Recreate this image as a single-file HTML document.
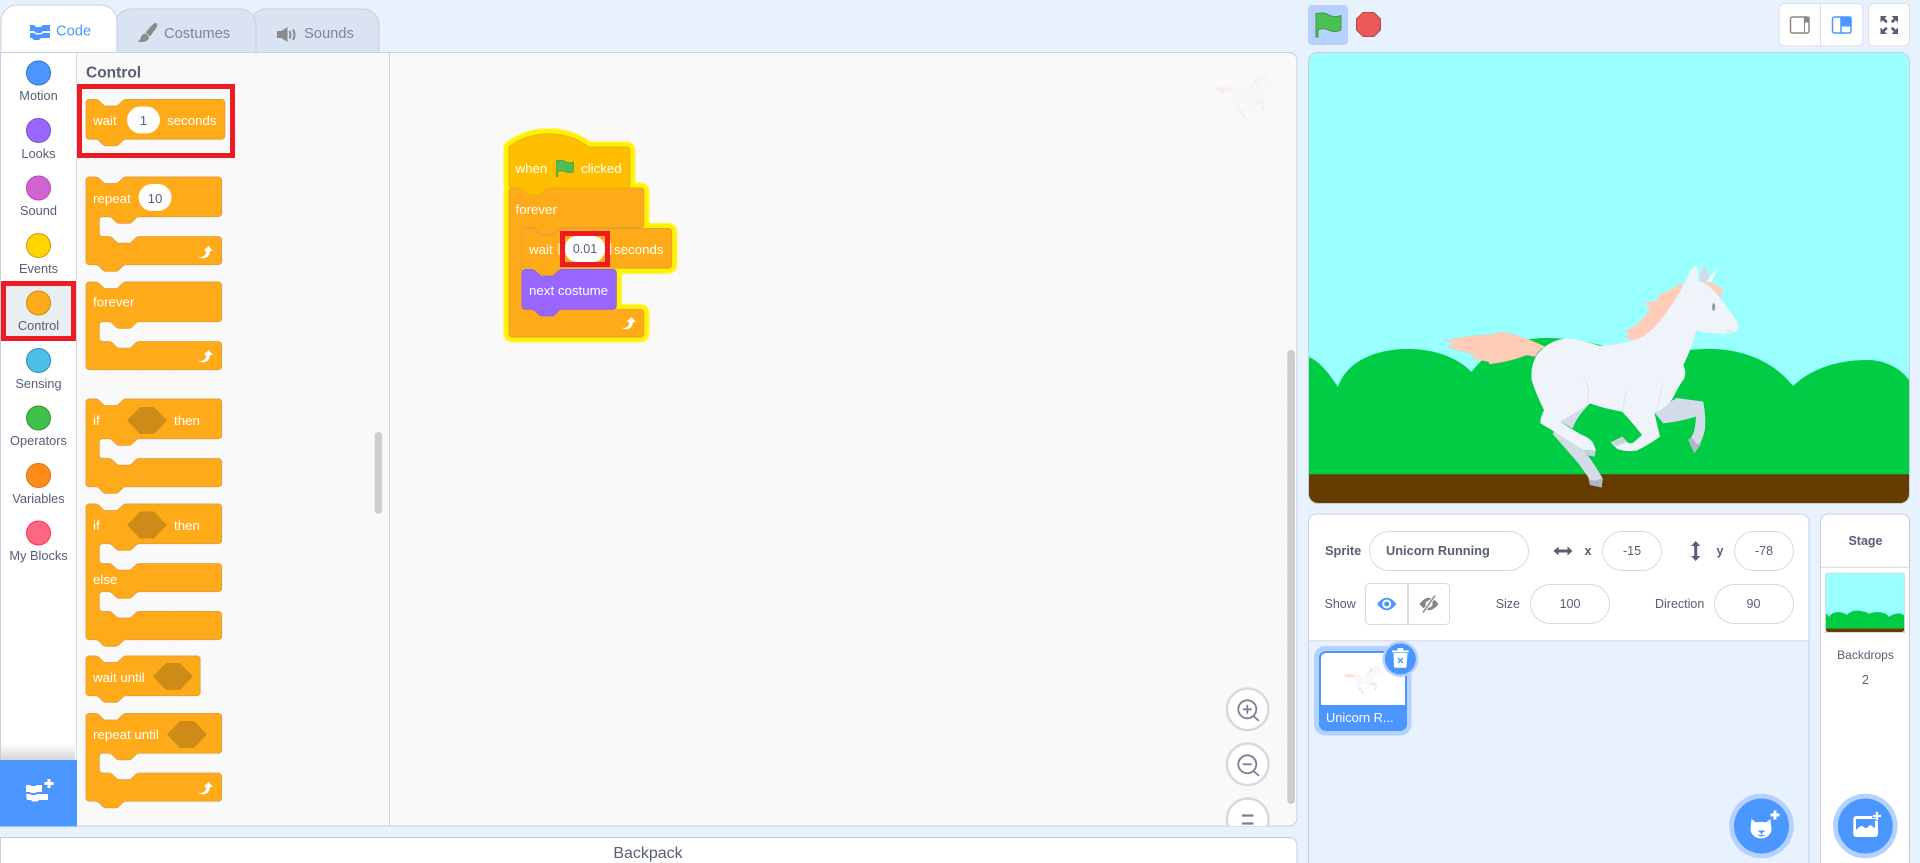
<!DOCTYPE html>
<html><head><meta charset="utf-8"><title>Scratch</title>
<style>
html,body{margin:0;padding:0;background:#e8f1fe;width:1920px;height:863px;overflow:hidden}
svg{display:block}
text{font-family:"Liberation Sans",sans-serif}
.b{fill:#fff;font-size:13.3px}
.c{fill:#575e75;font-size:12.8px;text-anchor:middle}
.l{fill:#575e75;font-size:12.5px}
.m{text-anchor:middle}
.B{font-weight:bold}
.o{fill:#ffab19;stroke:#e0a03a;stroke-width:1.1}
</style></head><body>
<svg width="1920" height="863" viewBox="0 0 1920 863" xmlns="http://www.w3.org/2000/svg">
<defs>
<pattern id="dots" x="6" y="2.8" width="33.6" height="33.6" patternUnits="userSpaceOnUse"><circle cx="1" cy="1" r=".8" fill="#e9e9e9"/></pattern>
<clipPath id="stageclip"><rect x="1309" y="53" width="600" height="450" rx="9"/></clipPath>
<clipPath id="panelclip"><path d="M0 52H1289a8 8 0 0 1 8 8V818a8 8 0 0 1-8 8H0z"/></clipPath>
<filter id="soft" x="-10%" y="-10%" width="120%" height="120%"><feGaussianBlur stdDeviation=".7"/></filter>

<path id="cNotch" d="M0 4a4 4 0 0 1 4-4H12c2 0 3 1 4 2l4 4c1 1 2 2 4 2h12c2 0 3-1 4-2l4-4c1-1 2-2 4-2H160a4 4 0 0 1 4 4V44a4 4 0 0 1-4 4H64c-2 0-3 1-4 2l-4 4c-1 1-2 2-4 2h-12c-2 0-3-1-4-2l-4-4c-1-1-2-2-4-2H20a4 4 0 0 0-4 4V68a4 4 0 0 0 4 4H28c2 0 3 1 4 2l4 4c1 1 2 2 4 2h12c2 0 3-1 4-2l4-4c1-1 2-2 4-2H160a4 4 0 0 1 4 4V102a4 4 0 0 1-4 4H48c-2 0-3 1-4 2l-4 4c-1 1-2 2-4 2h-12c-2 0-3-1-4-2l-4-4c-1-1-2-2-4-2H4a4 4 0 0 1-4-4z"/>
<path id="cFlat" d="M0 4a4 4 0 0 1 4-4H12c2 0 3 1 4 2l4 4c1 1 2 2 4 2h12c2 0 3-1 4-2l4-4c1-1 2-2 4-2H160a4 4 0 0 1 4 4V44a4 4 0 0 1-4 4H64c-2 0-3 1-4 2l-4 4c-1 1-2 2-4 2h-12c-2 0-3-1-4-2l-4-4c-1-1-2-2-4-2H20a4 4 0 0 0-4 4V68a4 4 0 0 0 4 4H28c2 0 3 1 4 2l4 4c1 1 2 2 4 2h12c2 0 3-1 4-2l4-4c1-1 2-2 4-2H160a4 4 0 0 1 4 4V102a4 4 0 0 1-4 4H4a4 4 0 0 1-4-4z"/>
<path id="cElse" d="M0 4a4 4 0 0 1 4-4H12c2 0 3 1 4 2l4 4c1 1 2 2 4 2h12c2 0 3-1 4-2l4-4c1-1 2-2 4-2H160a4 4 0 0 1 4 4V44a4 4 0 0 1-4 4H64c-2 0-3 1-4 2l-4 4c-1 1-2 2-4 2h-12c-2 0-3-1-4-2l-4-4c-1-1-2-2-4-2H20a4 4 0 0 0-4 4V68a4 4 0 0 0 4 4H28c2 0 3 1 4 2l4 4c1 1 2 2 4 2h12c2 0 3-1 4-2l4-4c1-1 2-2 4-2H160a4 4 0 0 1 4 4V102a4 4 0 0 1-4 4H64c-2 0-3 1-4 2l-4 4c-1 1-2 2-4 2h-12c-2 0-3-1-4-2l-4-4c-1-1-2-2-4-2H20a4 4 0 0 0-4 4V126a4 4 0 0 0 4 4H28c2 0 3 1 4 2l4 4c1 1 2 2 4 2h12c2 0 3-1 4-2l4-4c1-1 2-2 4-2H160a4 4 0 0 1 4 4V160a4 4 0 0 1-4 4H48c-2 0-3 1-4 2l-4 4c-1 1-2 2-4 2h-12c-2 0-3-1-4-2l-4-4c-1-1-2-2-4-2H4a4 4 0 0 1-4-4z"/>
<path id="wait168" d="M0 4a4 4 0 0 1 4-4H12c2 0 3 1 4 2l4 4c1 1 2 2 4 2h12c2 0 3-1 4-2l4-4c1-1 2-2 4-2H164a4 4 0 0 1 4 4V44a4 4 0 0 1-4 4H48c-2 0-3 1-4 2l-4 4c-1 1-2 2-4 2h-12c-2 0-3-1-4-2l-4-4c-1-1-2-2-4-2H4a4 4 0 0 1-4-4z"/>
<path id="wait138" d="M0 4a4 4 0 0 1 4-4H12c2 0 3 1 4 2l4 4c1 1 2 2 4 2h12c2 0 3-1 4-2l4-4c1-1 2-2 4-2H134a4 4 0 0 1 4 4V44a4 4 0 0 1-4 4H48c-2 0-3 1-4 2l-4 4c-1 1-2 2-4 2h-12c-2 0-3-1-4-2l-4-4c-1-1-2-2-4-2H4a4 4 0 0 1-4-4z"/>
<path id="wait181" d="M0 4a4 4 0 0 1 4-4H12c2 0 3 1 4 2l4 4c1 1 2 2 4 2h12c2 0 3-1 4-2l4-4c1-1 2-2 4-2H177a4 4 0 0 1 4 4V44a4 4 0 0 1-4 4H48c-2 0-3 1-4 2l-4 4c-1 1-2 2-4 2h-12c-2 0-3-1-4-2l-4-4c-1-1-2-2-4-2H4a4 4 0 0 1-4-4z"/>
<path id="next114" d="M0 4a4 4 0 0 1 4-4H12c2 0 3 1 4 2l4 4c1 1 2 2 4 2h12c2 0 3-1 4-2l4-4c1-1 2-2 4-2H110a4 4 0 0 1 4 4V44a4 4 0 0 1-4 4H48c-2 0-3 1-4 2l-4 4c-1 1-2 2-4 2h-12c-2 0-3-1-4-2l-4-4c-1-1-2-2-4-2H4a4 4 0 0 1-4-4z"/>
<path id="hat" d="M0 0c25.6-21.3 70.4-21.3 96 0H142a4 4 0 0 1 4 4V46a4 4 0 0 1-4 4H48c-2 0-3 1-4 2l-4 4c-1 1-2 2-4 2h-12c-2 0-3-1-4-2l-4-4c-1-1-2-2-4-2H4a4 4 0 0 1-4-4z"/>
<path id="fvr" d="M0 4a4 4 0 0 1 4-4H12c2 0 3 1 4 2l4 4c1 1 2 2 4 2h12c2 0 3-1 4-2l4-4c1-1 2-2 4-2H159a4 4 0 0 1 4 4V44a4 4 0 0 1-4 4H64c-2 0-3 1-4 2l-4 4c-1 1-2 2-4 2h-12c-2 0-3-1-4-2l-4-4c-1-1-2-2-4-2H20a4 4 0 0 0-4 4V143a4 4 0 0 0 4 4H28c2 0 3 1 4 2l4 4c1 1 2 2 4 2h12c2 0 3-1 4-2l4-4c1-1 2-2 4-2H159a4 4 0 0 1 4 4V176a4 4 0 0 1-4 4H4a4 4 0 0 1-4-4z"/>

<path id="ar" d="M0 10.500C4.500 11.800 8 10 8.300 5H5.500L10.500 0L15 5H12C12 11 6 14.500 0 10.500z" fill="#fff"/>
<path id="flag" d="M2 1.500Q8 0 14 3.500Q20 6 25 3.500V18Q20 21 14 18.500Q8 15.500 2 17.500V25H0V1.500z"/>
<polygon id="hex" points="0,13.500 13,0 27,0 40,13.500 27,27 13,27" fill="#cf8b17"/>
<rect id="oval" x="0" y="0" width="33" height="27" rx="13.500" fill="#fff"/>

<g id="hills">
<rect x="1309" y="53" width="600" height="450" fill="#99ffff"/>
<path d="M1309 357C1320 362 1328 372 1338 387C1346 362 1375 349 1407 349C1436 349 1458 358 1471.500 372C1487 351 1515 338 1546 338C1580 338 1610 345 1640 362C1655 355 1680 349 1710 349C1745 349 1775 363 1793 386C1810 370 1835 360 1867 360C1885 360 1900 368 1909 380V480H1309z" fill="#00cc44"/>
<rect x="1309" y="474.300" width="600" height="29" fill="#663c00"/>
</g>

<g id="uni">
<g transform="translate(1420,240) scale(.33333)">
 <path d="M75 302Q150 285 225 283L237 276Q290 280 375 320Q355 330 345 350L320 345Q270 365 210 372L205 365L155 355L168 345Q130 335 80 320L105 310z" fill="#ffccb8" stroke="#f1b9a6" stroke-width="1"/>
 <path d="M612 275Q645 262 665 240Q680 220 692 205L670 190L715 180L712 168Q750 150 785 130L790 170Q735 240 672 292Q650 300 635 298L612 290L632 282z" fill="#ffccb8"/>
 <path d="M850 72L838 122L866 128L866 102z" fill="#d4dbe8"/>
 <path d="M398 582Q400 572 420 575L495 625L500 642Q525 675 548 715L545 742L510 735L505 712Q490 690 475 670Q445 635 398 582z" fill="#d4dbe8"/>
 <path d="M480 490L512 488Q470 530 458 565L420 545z" fill="#d4dbe8"/>
 <path d="M703 518Q740 490 770 474L850 485Q858 530 855 565Q850 600 823 640L805 600Q825 590 828 530Q780 545 730 550z" fill="#d4dbe8"/>
 <path d="M823 640L805 598L815 592L830 612L845 610z" fill="#aeb7c7"/>
 <path d="M510 735L507 718L525 722L545 716L545 742z" fill="#aeb7c7"/>
 <path d="M783 150L800 115Q818 78 830 76Q837 92 836 125Q862 128 880 150Q915 190 945 235Q960 255 952 270Q945 282 915 280Q870 282 828 272Q822 300 812 325Q800 355 790 375Q800 395 793 415Q775 440 760 472Q740 505 703 518L720 590Q690 612 650 632Q615 636 592 627L572 607L607 590L622 607Q632 612 640 608L666 585Q635 545 606 515Q550 505 510 490Q465 520 420 545L480 582Q512 595 520 610L528 632L490 630Q420 585 362 550Q358 540 372 510Q345 455 335 420Q330 380 350 345Q385 300 440 295Q490 300 540 318Q610 315 670 290Q725 250 783 150z" fill="#eff4fa"/>
 <path d="M572 607L607 590L618 607L590 618z" fill="#c9d1de"/>
 <path d="M490 630L527 632L524 650L498 645z" fill="#c9d1de"/>
 <path d="M895 78L858 128L875 125z" fill="#f6f9fc"/>
 <path d="M838 122Q865 125 890 135L910 150L900 160L910 182Q890 160 880 150Q868 138 858 130z" fill="#ffccb8"/>
 <ellipse cx="881" cy="201" rx="4.500" ry="11.500" fill="#8a94a5"/>
 <path d="M918 270L945 278" stroke="#c8d0dc" stroke-width="2" fill="none"/>
 <path d="M620 450L607 510M730 430L710 510M490 410Q515 450 500 490" stroke="#d4dbe8" stroke-width="2" fill="none"/>
</g>
</g>
</defs>

<!-- background -->
<rect width="1920" height="863" fill="#e8f1fe"/>

<!-- tabs -->
<path d="M250 52.500V25a16 16 0 0 1 16-16H363a16 16 0 0 1 16 16V52.500z" fill="#d9e3f2" stroke="#c5cfdf"/>
<path d="M115 52.500V25a16 16 0 0 1 16-16H240a16 16 0 0 1 16 16V52.500z" fill="#d9e3f2" stroke="#c5cfdf"/>

<!-- main panel -->
<path d="M.5 52.500H1289a8 8 0 0 1 8 8V818a8 8 0 0 1-8 8H.5z" fill="#f9f9f9" stroke="#c5cfdf"/>
<path d="M77 53H1296V818a8 8 0 0 1-8 7.500H77z" fill="url(#dots)"/>
<path d="M1 52.500V21a16 16 0 0 1 16-16H101a16 16 0 0 1 16 16V52.500" fill="#fff" stroke="#c5cfdf"/>
<path d="M1 52.500H117" stroke="#c5cfdf"/>

<!-- tab icons/text -->
<g fill="#4c97ff">
<path d="M30 25h4l2 2h5l2-2h7v6h-7l-2 2h-5l-2-2h-4z"/>
<path d="M30 33h4l2 1.500h5l2-1.500h7v5h-9l-2 2h-5l-2-2h-2z"/>
</g>
<text x="56" y="35.300" fill="#4c97ff" font-size="14.700">Code</text>
<g fill="#8b8b8b">
<path d="M145.500 32.500L152 25Q155.500 22 157 23.500Q158 25.500 155.500 29L150 36.500z"/>
<path d="M144.500 33.500Q148.500 34.500 149 38Q148 41 144 41.800Q141 42.500 138 41.500Q140.500 40 141 37Q141.800 34.500 144.500 33.500z"/>
</g>
<text x="164" y="38" fill="#7e8598" font-size="14.700">Costumes</text>
<g fill="#8b8b8b">
<path d="M277 31h4.500l6-4v15l-6-4H277z"/>
<path d="M289.500 31Q291.500 34.800 289.500 38.500" stroke="#8b8b8b" stroke-width="2" fill="none"/>
<path d="M293 29.500Q296 34.800 293 40" stroke="#8b8b8b" stroke-width="2" fill="none"/>
</g>
<text x="304" y="38" fill="#7e8598" font-size="14.700">Sounds</text>

<!-- category column -->
<rect x="1" y="53" width="75" height="707" fill="#fff"/>
<rect x="76" y="53" width="1" height="773" fill="#d9dfe9"/>
<rect x="389" y="53" width="1" height="773" fill="#ced4de"/>
<rect x="3" y="284" width="71" height="55" fill="#e9eef2"/>
<g stroke-width="1">
<circle cx="38.500" cy="73" r="12" fill="#4c97ff" stroke="#3373cc"/>
<circle cx="38.500" cy="130.500" r="12" fill="#9966ff" stroke="#774dcb"/>
<circle cx="38.500" cy="188" r="12" fill="#cf63cf" stroke="#bd42bd"/>
<circle cx="38.500" cy="245.500" r="12" fill="#ffd500" stroke="#cc9900"/>
<circle cx="38.500" cy="303" r="12" fill="#ffab19" stroke="#cf8b17"/>
<circle cx="38.500" cy="360.500" r="12" fill="#4cbfe6" stroke="#2e8eb8"/>
<circle cx="38.500" cy="418" r="12" fill="#40bf4a" stroke="#389438"/>
<circle cx="38.500" cy="475.500" r="12" fill="#ff8c1a" stroke="#db6e00"/>
<circle cx="38.500" cy="533" r="12" fill="#ff6680" stroke="#ff3355"/>
</g>
<text class="c" x="38.500" y="100">Motion</text>
<text class="c" x="38.500" y="158">Looks</text>
<text class="c" x="38.500" y="215">Sound</text>
<text class="c" x="38.500" y="273">Events</text>
<text class="c" x="38.500" y="330">Control</text>
<text class="c" x="38.500" y="388">Sensing</text>
<text class="c" x="38.500" y="445">Operators</text>
<text class="c" x="38.500" y="503">Variables</text>
<text class="c" x="38.500" y="560">My Blocks</text>
<rect x="3.500" y="283.500" width="70" height="55" fill="none" stroke="#ed1c24" stroke-width="5"/>
<linearGradient id="fade" x1="0" y1="0" x2="0" y2="1"><stop offset="0" stop-color="#fff"/><stop offset="1" stop-color="#d6d6d6"/></linearGradient>
<rect x="1" y="743" width="74" height="17" fill="url(#fade)"/>
<rect x="0" y="760" width="77" height="66.500" fill="#4c97ff"/>
<g fill="#fff">
<path d="M26 785h4l1.500 1h4l1.500-1h5v7h-5l-1.500 1h-4l-1.500-1h-4z"/>
<path d="M26 794h4l1.500 1h4l1.500-1h11v6h-9l-1.500 1.500h-5l-1.500-1.500h-4z"/>
<path d="M47.500 779h3v3h3v3h-3v3h-3v-3h-3v-3h3z"/>
</g>

<!-- flyout -->
<text x="86" y="77.500" fill="#575e75" font-size="15.500" class="B">Control</text>

<use href="#wait168" class="o" transform="translate(86,99.500) scale(.827)"/>
<text class="b" x="93" y="125">wait</text>
<use href="#oval" x="127" y="106.500"/>
<text x="143.500" y="125" fill="#575e75" font-size="13.300" class="m">1</text>
<text class="b" x="167" y="125">seconds</text>
<rect x="79.500" y="86.500" width="153" height="69" fill="none" stroke="#ed1c24" stroke-width="5"/>

<use href="#cNotch" class="o" transform="translate(86,177) scale(.827)"/>
<text class="b" x="93" y="203">repeat</text>
<use href="#oval" x="138.500" y="184"/>
<text x="155" y="203" fill="#575e75" font-size="13.300" class="m">10</text>
<use href="#ar" x="198" y="246"/>

<use href="#cFlat" class="o" transform="translate(86,282) scale(.827)"/>
<text class="b" x="93" y="306.500">forever</text>
<use href="#ar" x="198" y="350"/>

<use href="#cNotch" class="o" transform="translate(86,399) scale(.827)"/>
<text class="b" x="93" y="425">if</text>
<use href="#hex" x="127" y="407"/>
<text class="b" x="174" y="425">then</text>

<use href="#cElse" class="o" transform="translate(86,504) scale(.827)"/>
<text class="b" x="93" y="530">if</text>
<use href="#hex" x="127" y="511.500"/>
<text class="b" x="174" y="530">then</text>
<text class="b" x="93" y="584">else</text>

<use href="#wait138" class="o" transform="translate(86,656) scale(.827)"/>
<text class="b" x="93" y="682">wait until</text>
<use href="#hex" x="153" y="663"/>

<use href="#cNotch" class="o" transform="translate(86,713.500) scale(.827)"/>
<text class="b" x="93" y="739">repeat until</text>
<use href="#hex" x="167" y="721"/>
<use href="#ar" x="198" y="782"/>

<rect x="374.700" y="432" width="7.500" height="82" rx="3.700" fill="#cecdce"/>

<!-- ghost unicorn in workspace -->
<g opacity=".22" transform="translate(1213,73) scale(.2) translate(-1445,-265)"><use href="#uni"/></g>

<!-- workspace script: glow -->
<g fill="#fff200" stroke="#fff200" stroke-width="13" stroke-linejoin="round" filter="url(#soft)">
<use href="#hat" transform="translate(509,147) scale(.827)"/>
<use href="#fvr" transform="translate(509,188) scale(.827)"/>
<use href="#wait181" transform="translate(522,228.500) scale(.827)"/>
<use href="#next114" transform="translate(522,269.500) scale(.827)"/>
</g>
<use href="#fvr" class="o" transform="translate(509,188) scale(.827)"/>
<use href="#hat" fill="#ffbf00" stroke="#e6ad10" stroke-width="1.100" transform="translate(509,147) scale(.827)"/>
<use href="#flag" fill="#4cbf56" stroke="#45993d" stroke-width="1" transform="translate(556.500,159.500) scale(.68)"/>
<text class="b" x="515.500" y="173">when</text>
<text class="b" x="581" y="173">clicked</text>
<text class="b" x="515.500" y="214">forever</text>
<use href="#ar" x="621" y="317"/>
<use href="#wait181" class="o" transform="translate(522,228.500) scale(.827)"/>
<text class="b" x="529" y="254">wait</text>
<text class="b" x="614" y="254">seconds</text>
<path d="M559 243v12M610.700 243v12" stroke="#fff" stroke-width="1"/>
<rect x="565" y="236" width="40" height="26" rx="12" fill="#fff"/>
<text x="585" y="253" fill="#575e75" font-size="12.500" class="m">0.01</text>
<rect x="562.500" y="233.500" width="45" height="31" fill="none" stroke="#ed1c24" stroke-width="5"/>
<use href="#next114" fill="#9966ff" stroke="#8a5ce6" stroke-width="1.100" transform="translate(522,269.500) scale(.827)"/>
<text class="b" x="529" y="295">next costume</text>

<!-- workspace scrollbar + zoom -->
<rect x="1287.300" y="350" width="7.700" height="454" rx="3.800" fill="#cecdce"/>
<g clip-path="url(#panelclip)">
<circle cx="1247.700" cy="709.300" r="20.800" fill="#fff" stroke="#d9d9d9" stroke-width="2.500"/>
<circle cx="1247.700" cy="764.300" r="20.800" fill="#fff" stroke="#d9d9d9" stroke-width="2.500"/>
<circle cx="1247.700" cy="819.300" r="20.800" fill="#fff" stroke="#d9d9d9" stroke-width="2.500"/>
<g fill="none" stroke="#7a8095" stroke-width="1.800" stroke-linecap="round">
<circle cx="1247.300" cy="709.300" r="9"/><path d="M1254 716.500L1258.300 720.300M1243.500 709.300h7.500M1247.300 705.500v7.500"/>
<circle cx="1247.300" cy="764.300" r="9"/><path d="M1254 771.500L1258.300 775.300M1243.500 764.300h7.500"/>
<path d="M1242 815.500h11.500M1242 823.500h11.500" stroke-width="2.200" stroke-linecap="butt"/>
</g>
</g>

<!-- backpack -->
<path d="M.5 863V837.500H1289a8 8 0 0 1 8 8V863" fill="#fff" stroke="#c5cfdf"/>
<text x="648" y="858" fill="#575e75" font-size="16" class="m">Backpack</text>

<!-- stage controls -->
<rect x="1308" y="5" width="40" height="40" rx="4" fill="#b5d2ff"/>
<use href="#flag" fill="#4cbf56" stroke="#45993d" stroke-width="1" x="1316" y="12"/>
<path d="M1363 12.500h11l6.500 6.500v11l-6.500 6.500h-11l-6.500-6.500V19z" fill="#ec5959" stroke="#b84848"/>

<path d="M1784 3.500H1858a5 5 0 0 1 5 5V41a5 5 0 0 1-5 5H1784a5 5 0 0 1-5-5V8.500a5 5 0 0 1 5-5z" fill="#fff" stroke="#d9dfe9"/>
<path d="M1820.500 4V46" stroke="#d9dfe9"/>
<rect x="1868.500" y="3.500" width="41" height="42.500" rx="5" fill="#fff" stroke="#d9dfe9"/>
<rect x="1790.500" y="17" width="18.500" height="16" rx="2" fill="none" stroke="#888" stroke-width="1.500"/>
<rect x="1804" y="16.500" width="5.500" height="6" fill="#888"/><path d="M1804.500 17V33" stroke="#888" stroke-width="1"/>
<rect x="1832.500" y="17" width="18.500" height="16" rx="2" fill="#fff" stroke="#4c97ff" stroke-width="1.500"/>
<rect x="1841" y="16.500" width="10.500" height="10" fill="#4c97ff"/><path d="M1841 17V33" stroke="#4c97ff" stroke-width="1.500"/>
<g fill="#575e75">
<path d="M1880.500 16h6.500l-2.300 2.300 3 3-1.900 1.900-3-3-2.300 2.300z"/>
<path d="M1898 16h-6.500l2.300 2.300-3 3 1.900 1.900 3-3 2.300 2.300z"/>
<path d="M1880.500 34h6.500l-2.300-2.300 3-3-1.900-1.900-3 3-2.300-2.300z"/>
<path d="M1898 34h-6.500l2.300-2.300-3-3 1.900-1.900 3 3 2.300-2.300z"/>
</g>

<!-- stage -->
<g clip-path="url(#stageclip)">
<use href="#hills"/>
<use href="#uni"/>
</g>
<rect x="1308.500" y="52.500" width="601" height="451" rx="9" fill="none" stroke="#c5cfdf"/>

<!-- sprite panel -->
<path d="M1308.500 863V522a8 8 0 0 1 8-8H1801a8 8 0 0 1 8 8V863" fill="#e8f1fe" stroke="#c5cfdf"/>
<path d="M1309 640.500V522a7.500 7.500 0 0 1 7.500-7.500H1801a7.500 7.500 0 0 1 7.500 7.500V640.500z" fill="#fff"/>
<path d="M1309 640.700H1808.500" stroke="#d9d9d9"/>
<text x="1325" y="555" fill="#575e75" font-size="12.800" class="B">Sprite</text>
<rect x="1369.500" y="531.500" width="159" height="39" rx="19.500" fill="#fff" stroke="#d9d9d9"/>
<text x="1386" y="555" fill="#575e75" font-size="12.800" class="B">Unicorn Running</text>
<g fill="#575e75"><path d="M1553.500 551l5-4.500v3h9v-3l5 4.500-5 4.500v-3h-9v3z"/></g>
<text x="1588" y="555" fill="#575e75" font-size="12.500" class="m B">x</text>
<rect x="1602.500" y="531.500" width="59" height="39" rx="19.500" fill="#fff" stroke="#d9d9d9"/>
<text x="1632" y="555" fill="#575e75" font-size="12.500" class="m">-15</text>
<g fill="#575e75"><path d="M1695.700 541l4.500 5h-3v10h3l-4.500 5-4.500-5h3v-10h-3z"/></g>
<text x="1720" y="555" fill="#575e75" font-size="12.500" class="m B">y</text>
<rect x="1734.500" y="531.500" width="59" height="39" rx="19.500" fill="#fff" stroke="#d9d9d9"/>
<text x="1764" y="555" fill="#575e75" font-size="12.500" class="m">-78</text>

<text class="l" x="1324.500" y="608">Show</text>
<rect x="1365.500" y="583.500" width="84" height="41" rx="4" fill="#fff" stroke="#d9d9d9"/>
<path d="M1408 584V624" stroke="#d9d9d9" stroke-width="2"/>
<path d="M1377 604q9.700-12.500 19.400 0q-9.700 12.500-19.400 0z" fill="#4c97ff"/>
<circle cx="1386.700" cy="604" r="4.500" fill="#fff"/><circle cx="1386.700" cy="604" r="2.500" fill="#4c97ff"/>
<path d="M1419.500 604q9.500-12.500 19 0q-9.500 12.500-19 0z" fill="#858585"/>
<circle cx="1429" cy="604" r="3.500" fill="#fff"/><circle cx="1429" cy="604" r="1.800" fill="#858585"/>
<path d="M1423 612.500L1435 595.500" stroke="#fff" stroke-width="3.500"/><path d="M1423 612.500L1435 595.500" stroke="#858585" stroke-width="1.500"/>
<text class="l" x="1495.700" y="608">Size</text>
<rect x="1530.500" y="584.500" width="79" height="39" rx="19.500" fill="#fff" stroke="#d9d9d9"/>
<text x="1570" y="608" fill="#575e75" font-size="12.500" class="m">100</text>
<text class="l" x="1655" y="608">Direction</text>
<rect x="1714.500" y="584.500" width="79" height="39" rx="19.500" fill="#fff" stroke="#d9d9d9"/>
<text x="1753.500" y="608" fill="#575e75" font-size="12.500" class="m">90</text>

<!-- sprite tile -->
<rect x="1314" y="646" width="97.500" height="89.500" rx="11" fill="#b5d2ff"/>
<rect x="1319" y="651" width="88" height="80" rx="7" fill="#4c97ff"/>
<path d="M1321 705V658a5 5 0 0 1 5-5H1400a5 5 0 0 1 5 5V705z" fill="#fff"/>
<g opacity=".55" transform="translate(1343,665) scale(.13) translate(-1445,-265)"><use href="#uni"/></g>
<text x="1326" y="722" fill="#fff" font-size="12.800">Unicorn R...</text>
<circle cx="1400.400" cy="659" r="18" fill="#b5d2ff"/>
<circle cx="1400.400" cy="659" r="15.500" fill="#4c97ff"/>
<g fill="#fff">
<path d="M1392 650.500h5.500v-1.500q0-1 1-1h3.800q1 0 1 1v1.500h5.500v1.700h-16.800z"/>
<path d="M1393.500 653h14l-1 13.500q0 1.200-1.500 1.200h-9.500q-1.500 0-1.500-1.200z"/>
</g>
<path d="M1398 658l5 5M1403 658l-5 5" stroke="#4c97ff" stroke-width="1.300"/>

<!-- add sprite -->
<circle cx="1761.500" cy="826" r="32.300" fill="#b5d2ff"/>
<circle cx="1761.500" cy="826" r="27.500" fill="#4c97ff"/>
<path d="M1751.500 819l4.500 3.500q5-1.300 10 0l4.500-3.500 1 10q0 3-2 5.500q-3.500 4-8.500 4t-8.500-4q-2-2.500-2-5.500z" fill="#fff"/>
<path d="M1759 831h5l-2.500 2zM1761.500 833v1.500M1758.500 835q3 1.500 6 0" stroke="#4c97ff" stroke-width="1" fill="#4c97ff"/>
<path d="M1773.500 810.500h3v3h3v3h-3v3h-3v-3h-3v-3h3z" fill="#fff"/>

<!-- stage panel -->
<path d="M1820.500 863V522a8 8 0 0 1 8-8H1901.500a8 8 0 0 1 8 8V863" fill="#fff" stroke="#c5cfdf"/>
<path d="M1821 567.300H1909" stroke="#d9d9d9"/>
<text x="1865.500" y="545" fill="#575e75" font-size="12.500" class="m B">Stage</text>
<g transform="translate(1825.400,573) scale(.132) translate(-1309,-53)"><use href="#hills"/></g>
<rect x="1825.400" y="573" width="79.200" height="59.500" rx="3" fill="none" stroke="#d9d9d9"/>
<text x="1865.500" y="659" fill="#575e75" font-size="12" class="m">Backdrops</text>
<text x="1865.500" y="684" fill="#575e75" font-size="12.500" class="m">2</text>
<circle cx="1865.300" cy="826" r="32.300" fill="#b5d2ff"/>
<circle cx="1865.300" cy="826" r="27.500" fill="#4c97ff"/>
<rect x="1853.300" y="816" width="24.700" height="21" rx="3" fill="#fff"/>
<path d="M1856 819h19v9.500q-3-3-5-3.500q-3 3.500-5 3q-3-2.500-4-2q-3 1.500-5 4z" fill="#4c97ff"/>
<path d="M1875.500 811.500h3v3h3v3h-3v3h-3v-3h-3v-3h3z" fill="#fff" stroke="#4c97ff" stroke-width=".7"/>
</svg>
</body></html>
